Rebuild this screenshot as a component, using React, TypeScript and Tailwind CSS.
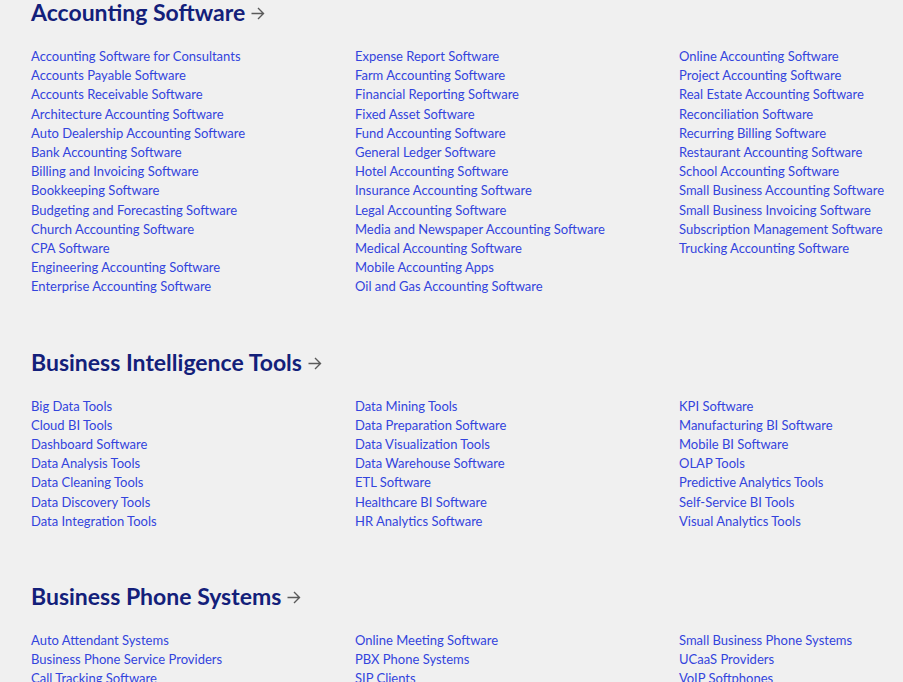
import React from "react";

const sections: { title: string; cols: string[][] }[] = [
  {
    title: "Accounting Software",
    cols: [
      [
        "Accounting Software for Consultants",
        "Accounts Payable Software",
        "Accounts Receivable Software",
        "Architecture Accounting Software",
        "Auto Dealership Accounting Software",
        "Bank Accounting Software",
        "Billing and Invoicing Software",
        "Bookkeeping Software",
        "Budgeting and Forecasting Software",
        "Church Accounting Software",
        "CPA Software",
        "Engineering Accounting Software",
        "Enterprise Accounting Software",
      ],
      [
        "Expense Report Software",
        "Farm Accounting Software",
        "Financial Reporting Software",
        "Fixed Asset Software",
        "Fund Accounting Software",
        "General Ledger Software",
        "Hotel Accounting Software",
        "Insurance Accounting Software",
        "Legal Accounting Software",
        "Media and Newspaper Accounting Software",
        "Medical Accounting Software",
        "Mobile Accounting Apps",
        "Oil and Gas Accounting Software",
      ],
      [
        "Online Accounting Software",
        "Project Accounting Software",
        "Real Estate Accounting Software",
        "Reconciliation Software",
        "Recurring Billing Software",
        "Restaurant Accounting Software",
        "School Accounting Software",
        "Small Business Accounting Software",
        "Small Business Invoicing Software",
        "Subscription Management Software",
        "Trucking Accounting Software",
      ],
    ],
  },
  {
    title: "Business Intelligence Tools",
    cols: [
      [
        "Big Data Tools",
        "Cloud BI Tools",
        "Dashboard Software",
        "Data Analysis Tools",
        "Data Cleaning Tools",
        "Data Discovery Tools",
        "Data Integration Tools",
      ],
      [
        "Data Mining Tools",
        "Data Preparation Software",
        "Data Visualization Tools",
        "Data Warehouse Software",
        "ETL Software",
        "Healthcare BI Software",
        "HR Analytics Software",
      ],
      [
        "KPI Software",
        "Manufacturing BI Software",
        "Mobile BI Software",
        "OLAP Tools",
        "Predictive Analytics Tools",
        "Self-Service BI Tools",
        "Visual Analytics Tools",
      ],
    ],
  },
  {
    title: "Business Phone Systems",
    cols: [
      ["Auto Attendant Systems", "Business Phone Service Providers", "Call Tracking Software"],
      ["Online Meeting Software", "PBX Phone Systems", "SIP Clients"],
      ["Small Business Phone Systems", "UCaaS Providers", "VoIP Softphones"],
    ],
  },
];

function Arrow() {
  return (
    <svg width="14" height="13" viewBox="0 0 14 13" className="ml-[6px] mt-[3px]" fill="none">
      <path d="M0.5 6.5h12M7 1l5.5 5.5L7 12" stroke="#5a5a5a" strokeWidth="1.4" />
    </svg>
  );
}

export default function App() {
  return (
    <div
      className="min-h-[682px] w-full bg-[#f0f0f0] overflow-hidden"
      style={{ fontFamily: "Lato, 'Open Sans', sans-serif" }}
    >
      <div className="pl-[31px] mt-[-2px] flex flex-col gap-[51px]">
        {sections.map((s) => (
          <section key={s.title}>
            <h2 className="flex items-center text-[23px] leading-[28px] font-bold text-[#13207a]">
              {s.title}
              <Arrow />
            </h2>
            <div className="mt-[21px] grid grid-cols-[324px_324px_248px]">
              {s.cols.map((c, i) => (
                <ul key={i} className="flex flex-col">
                  {c.map((l) => (
                    <li key={l} className="text-[13px] leading-[19.2px] text-[#3344dd] whitespace-nowrap">
                      {l}
                    </li>
                  ))}
                </ul>
              ))}
            </div>
          </section>
        ))}
      </div>
    </div>
  );
}
